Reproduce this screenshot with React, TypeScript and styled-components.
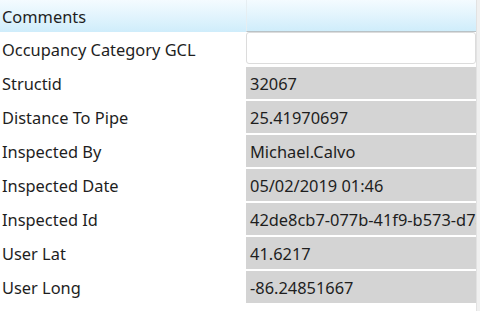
import React from 'react';
import styled, { createGlobalStyle } from 'styled-components';

const GlobalStyle = createGlobalStyle`
  body {
    margin: 0;
    background: #ffffff;
    font-family: "Noto Sans", "Open Sans", sans-serif;
  }
`;

const Panel = styled.div`
  width: 480px;
  height: 311px;
  display: flex;
  overflow: hidden;
  background: #ffffff;
`;

const Grid = styled.div`
  width: 476px;
  display: grid;
  grid-template-columns: 246px 230px;
  grid-auto-rows: 34px;
  grid-template-rows: 32px;
  align-items: start;
`;

const Scrollbar = styled.div`
  width: 4px;
  background: #f0f0f0;
  border-left: 1px solid #e2e2e2;
`;

const HeaderCell = styled.div<{ $value?: boolean }>`
  height: 32px;
  box-sizing: border-box;
  display: flex;
  align-items: center;
  padding-left: 2px;
  background: linear-gradient(180deg, #f4fbff 0%, #e2f4fd 50%, #cfedfb 100%);
  font-size: 16.4px;
  color: #1e1e1e;
  border-left: ${p => (p.$value ? '1px solid #e6eef2' : 'none')};
  border-bottom: ${p => (p.$value ? '1px solid #b9c2c6' : 'none')};
`;

const Label = styled.div`
  height: 34px;
  display: flex;
  align-items: center;
  padding-left: 2px;
  font-size: 16.4px;
  color: #1e1e1e;
  white-space: nowrap;
`;

const Value = styled.div<{ $editable?: boolean }>`
  box-sizing: border-box;
  height: 32px;
  margin-top: ${p => (p.$editable ? '0' : '1px')};
  display: flex;
  align-items: center;
  padding-left: 4px;
  font-size: 16.4px;
  color: #1e1e1e;
  white-space: nowrap;
  overflow: hidden;
  background: ${p => (p.$editable ? '#ffffff' : '#d4d4d4')};
  border: ${p => (p.$editable ? '1px solid #dcdcdc' : 'none')};
  border-radius: ${p => (p.$editable ? '3px' : '0')};
`;

const rows: { label: string; value: string; editable?: boolean }[] = [
  { label: 'Occupancy Category GCL', value: '', editable: true },
  { label: 'Structid', value: '32067' },
  { label: 'Distance To Pipe', value: '25.41970697' },
  { label: 'Inspected By', value: 'Michael.Calvo' },
  { label: 'Inspected Date', value: '05/02/2019 01:46' },
  { label: 'Inspected Id', value: '42de8cb7-077b-41f9-b573-d7a1' },
  { label: 'User Lat', value: '41.6217' },
  { label: 'User Long', value: '-86.24851667' },
];

export default function App() {
  return (
    <>
      <GlobalStyle />
      <Panel>
        <Grid>
          <HeaderCell>Comments</HeaderCell>
          <HeaderCell $value />
          {rows.map(r => (
            <React.Fragment key={r.label}>
              <Label>{r.label}</Label>
              <Value $editable={r.editable}>{r.value}</Value>
            </React.Fragment>
          ))}
        </Grid>
        <Scrollbar />
      </Panel>
    </>
  );
}
